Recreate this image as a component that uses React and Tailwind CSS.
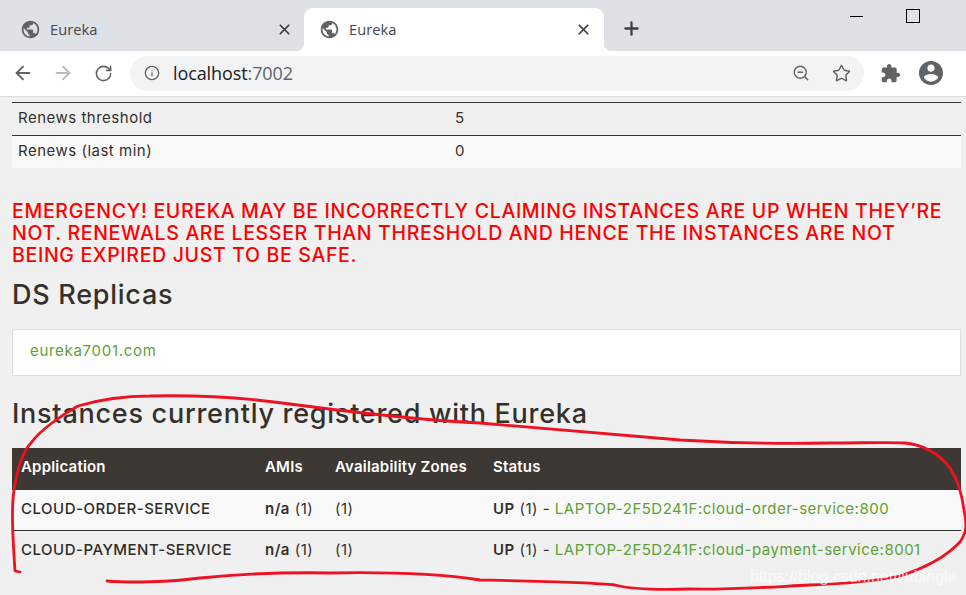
import React from "react";
import { ArrowLeft, ArrowRight, RotateCw, Info, ZoomOut, Star, Plus, X } from "lucide-react";

const Globe = () => (
  <svg viewBox="0 0 24 24" className="w-[21px] h-[21px] shrink-0 fill-[#5f6368]">
    <path d="M12 2C6.48 2 2 6.48 2 12s4.48 10 10 10 10-4.48 10-10S17.52 2 12 2zm-1 17.93c-3.95-.49-7-3.85-7-7.93 0-.62.08-1.21.21-1.79L9 15v1c0 1.1.9 2 2 2v1.93zm6.9-2.54c-.26-.81-1-1.39-1.9-1.39h-1v-3c0-.55-.45-1-1-1H8v-2h2c.55 0 1-.45 1-1V7h2c1.1 0 2-.9 2-2v-.41c2.93 1.19 5 4.06 5 7.41 0 2.08-.8 3.97-2.1 5.39z" />
  </svg>
);

const Tab = ({ active }) => (
  <div className={active
    ? "relative w-[300px] h-[43px] bg-white rounded-t-[9px] flex items-center pl-[15px] pr-[12px]"
    : "w-[304px] h-[43px] flex items-center pl-[20px] pr-[11px]"}>
    <Globe />
    <span className="ml-[9px] text-[14.7px] text-[#45484d] font-['Open_Sans',sans-serif] flex-1">Eureka</span>
    <X size={17} strokeWidth={2.4} className="text-[#3c4043]" />
    {active && <span className="absolute left-[-8px] bottom-0 w-2 h-2 bg-[radial-gradient(circle_at_0_0,#dee1e6_8px,#ffffff_8.5px)]" />}
    {active && <span className="absolute right-[-8px] bottom-0 w-2 h-2 bg-[radial-gradient(circle_at_100%_0,#dee1e6_8px,#ffffff_8.5px)]" />}
  </div>
);

const Scribble = () => (
  <svg viewBox="0 0 966 595" className="absolute inset-0 w-[966px] h-[595px] pointer-events-none fill-none">
    <path
      d="M20 572 L15 571 C13 540 11 510 14 490 C18 465 24 450 31 443 C40 430 62 415 78 406 C105 398 130 396 150 396 C190 395 240 397 290 404 C350 412 420 420 480 423 C520 427 600 433 680 440 C730 443 780 444 830 443 C860 443 890 442 905 443 C925 445 940 455 950 468 C958 480 962 495 964 510 C967 525 967 532 960 542 C945 558 925 568 900 576 C870 582 840 584 810 585 C770 587 730 590 690 589 C660 590 630 589 615 585 C590 582 530 581 480 580 C440 574 380 572 330 573 C280 572 240 574 200 578 C170 582 130 583 107 581"
      stroke="#ee1122"
      strokeWidth="2.8"
      strokeLinecap="round"
      strokeLinejoin="round"
    />
  </svg>
);

const Row = ({ name, link, last }) => (
  <tr className={last ? "h-[40px] border-t border-[#333]" : "h-[40px] bg-[#f9f9f9]"}>
    <td className={last ? "pl-[9px] font-medium text-[#2f2c28]" : "pl-[9px] pb-[2px] font-medium text-[#2f2c28]"}>{name}</td>
    <td className={last ? "pl-[9px]" : "pl-[9px] pb-[2px]"}><b className="font-semibold">n/a</b> (1)</td>
    <td className={last ? "pl-[9px]" : "pl-[9px] pb-[2px]"}>(1)</td>
    <td className={last ? "pl-[9px]" : "pl-[9px] pb-[2px]"}><b className="font-semibold">UP</b> (1) - <span className="text-[#5fa133]">{link}</span></td>
  </tr>
);

export default function App() {
  return (
    <div className="relative w-[966px] h-[595px] overflow-hidden bg-[#f0f0f0] font-['Inter',sans-serif] text-[#35302b]">
      <div className="h-[51px] bg-[#dee1e6] flex items-end relative">
        <Tab />
        <Tab active />
        <Plus size={21} strokeWidth={2.6} className="ml-[17px] mb-[12px] text-[#3c4043]" />
        <div className="ml-auto self-start flex items-center h-[32px]">
          <span className="w-[13px] h-px bg-black mr-[43px]" />
          <span className="w-[14px] h-[14px] border border-black mr-[43px]" />
          <X size={13} strokeWidth={1} className="text-black mr-[-10px]" />
        </div>
      </div>

      <div className="h-[46px] bg-white border-b border-[#dadce0] flex items-center pb-[1px]">
        <ArrowLeft size={22} strokeWidth={2} className="ml-[12px] text-[#5f6368]" />
        <ArrowRight size={22} strokeWidth={2} className="ml-[18px] text-[#babcbe]" />
        <RotateCw size={19} strokeWidth={2} className="ml-[20px] text-[#5f6368]" />
        <div className="ml-[17px] w-[734px] h-[35px] rounded-full bg-[#f1f3f4] flex items-center">
          <Info size={16} strokeWidth={2} className="ml-[14px] text-[#5f6368]" />
          <span className="ml-[13px] text-[18px] tracking-[-0.1px] text-[#202124] font-['Open_Sans',sans-serif] flex-1">localhost<span className="text-[#5f6368]">:7002</span></span>
          <ZoomOut size={18} strokeWidth={1.8} className="text-[#5f6368]" />
          <Star size={19} strokeWidth={1.8} className="ml-[22px] mr-[13px] text-[#5f6368]" />
        </div>
        <svg viewBox="0 0 24 24" className="ml-[16px] w-[21px] h-[21px] fill-[#5f6368]">
          <path d="M20.5 11H19V7c0-1.1-.9-2-2-2h-4V3.5C13 2.12 11.88 1 10.5 1S8 2.12 8 3.5V5H4c-1.1 0-1.99.9-1.99 2v3.8H3.5c1.49 0 2.7 1.21 2.7 2.7s-1.21 2.7-2.7 2.7H2V20c0 1.1.9 2 2 2h3.8v-1.5c0-1.49 1.21-2.7 2.7-2.7 1.49 0 2.7 1.21 2.7 2.7V22H17c1.1 0 2-.9 2-2v-4h1.5c1.38 0 2.5-1.12 2.5-2.5S21.88 11 20.5 11z" />
        </svg>
        <svg viewBox="2 2 20 20" className="ml-[18px] w-[24px] h-[24px] fill-[#5f6368]">
          <path d="M12 2C6.48 2 2 6.48 2 12s4.48 10 10 10 10-4.48 10-10S17.52 2 12 2zm0 3c1.66 0 3 1.34 3 3s-1.34 3-3 3-3-1.34-3-3 1.34-3 3-3zm0 14.2c-2.5 0-4.71-1.28-6-3.22.03-1.99 4-3.08 6-3.08 1.99 0 5.97 1.09 6 3.08-1.29 1.94-3.5 3.22-6 3.22z" />
        </svg>
      </div>

      <div className="pl-[12px] pr-[5px] pt-[5px] text-[15px] tracking-[0.5px]">
        <div className="border-t border-[#333] h-[33px] flex items-center pb-[2px]">
          <span className="pl-[6px] w-[443px]">Renews threshold</span><span>5</span>
        </div>
        <div className="border-t border-[#333] h-[33px] bg-[#f9f9f9] flex items-center pb-[2px]">
          <span className="pl-[6px] w-[443px]">Renews (last min)</span><span>0</span>
        </div>

        <h4 className="mt-[32px] max-w-[935px] text-[19.5px] leading-[22px] font-medium uppercase tracking-[0.67px] text-[#ff0000]">
          Emergency! Eureka may be incorrectly claiming instances are up when they’re not. Renewals are lesser than threshold and hence the instances are not being expired just to be safe.
        </h4>

        <h1 className="mt-[11px] text-[27px] leading-[36px] font-medium tracking-[0.74px] text-[#35302b]">DS Replicas</h1>

        <div className="mt-[16px] h-[47px] bg-white border border-[#ddd] flex items-center pl-[17px] pb-[3px] tracking-[0.7px] text-[#5fa133]">eureka7001.com</div>

        <h1 className="mt-[20px] text-[27px] leading-[36px] font-medium tracking-[0.74px] text-[#35302b]">Instances currently registered with Eureka</h1>

        <table className="mt-[16px] w-full border-collapse table-fixed">
          <thead>
            <tr className="h-[42px] bg-[#3d3833] text-white text-left tracking-[0.2px]">
              <th className="pl-[9px] pb-[4px] w-[244px] font-semibold">Application</th>
              <th className="pl-[9px] pb-[4px] w-[70px] font-semibold">AMIs</th>
              <th className="pl-[9px] pb-[4px] w-[158px] font-semibold">Availability Zones</th>
              <th className="pl-[9px] pb-[4px] font-semibold">Status</th>
            </tr>
          </thead>
          <tbody>
            <Row name="CLOUD-ORDER-SERVICE" link="LAPTOP-2F5D241F:cloud-order-service:800" />
            <Row name="CLOUD-PAYMENT-SERVICE" link="LAPTOP-2F5D241F:cloud-payment-service:8001" last />
          </tbody>
        </table>
      </div>

      <Scribble />
      <span className="absolute left-[750px] top-[566px] text-[16px] leading-[22px] text-white/70 font-['Liberation_Sans',sans-serif]">https://blog.csdn.net/liubingle</span>
    </div>
  );
}
